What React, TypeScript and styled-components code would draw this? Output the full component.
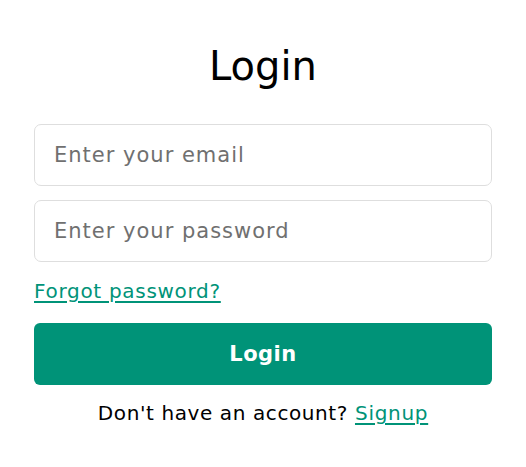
import styled, { createGlobalStyle } from 'styled-components';

const GlobalStyle = createGlobalStyle`
  * { box-sizing: border-box; }
  body {
    margin: 0;
    background: #ffffff;
    font-family: 'DejaVu Sans', 'Liberation Sans', sans-serif;
  }
`;

const GREEN = '#009378';

export default function App() {
  return (
    <>
      <GlobalStyle />
      <Wrapper>
        <Title>Login</Title>
        <Form onSubmit={(e) => e.preventDefault()}>
          <Input type='email' placeholder='Enter your email' />
          <Input type='password' placeholder='Enter your password' />
          <Forgot href='#'>Forgot password?</Forgot>
          <Button type='submit'>Login</Button>
          <Footer>
            Don't have an account? <TextLink href='#'>Signup</TextLink>
          </Footer>
        </Form>
      </Wrapper>
    </>
  );
}

const Wrapper = styled.div`
  width: 458px;
  margin: 0 auto;
  padding-top: 38px;
`;

const Title = styled.h1`
  margin: 0 0 30px;
  text-align: center;
  font-size: 40px;
  font-weight: 400;
  line-height: 56px;
  color: #000;
`;

const Form = styled.form`
  display: flex;
  flex-direction: column;
  gap: 14px;
`;

const Input = styled.input`
  height: 62px;
  width: 100%;
  padding: 0 19px;
  border: 1px solid #dedede;
  border-radius: 7px;
  font-family: inherit;
  font-size: 21px;
  letter-spacing: 1px;
  color: #333;
  outline: none;

  &::placeholder {
    color: #707070;
  }
`;

const TextLink = styled.a`
  color: ${GREEN};
  font-size: 20px;
  line-height: 28px;
  letter-spacing: 0.7px;
  text-decoration: underline;
  text-underline-offset: 3px;
`;

const Forgot = styled(TextLink)`
  align-self: flex-start;
  margin: 1px 0 4px;
`;

const Button = styled.button`
  height: 62px;
  width: 100%;
  border: none;
  border-radius: 6px;
  background: ${GREEN};
  color: #fff;
  font-family: inherit;
  font-size: 21px;
  font-weight: 700;
  letter-spacing: 0.5px;
  cursor: pointer;
`;

const Footer = styled.p`
  margin: 0;
  padding-top: 0;
  text-align: center;
  font-size: 20px;
  line-height: 28px;
  letter-spacing: 0.6px;
  color: #000;
`;
